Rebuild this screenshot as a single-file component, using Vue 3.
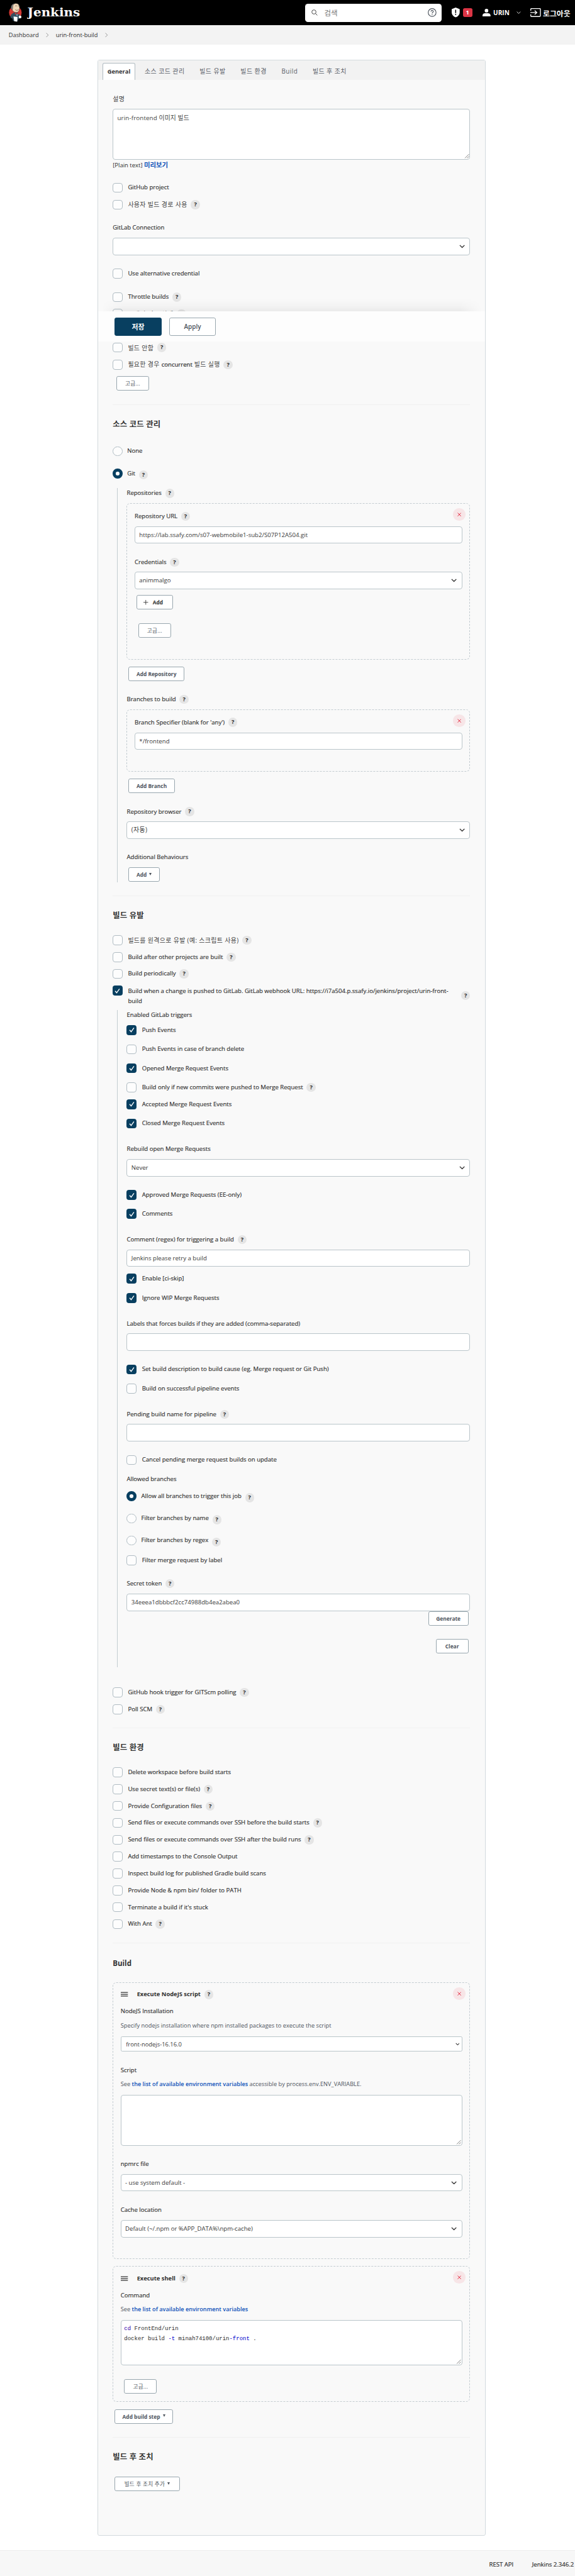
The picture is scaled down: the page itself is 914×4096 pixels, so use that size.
<script setup>
const tabs = ['소스 코드 관리', '빌드 유발', '빌드 환경', 'Build', '빌드 후 조치']

const environment = [
  { text: 'Delete workspace before build starts' },
  { text: 'Use secret text(s) or file(s)', help: true },
  { text: 'Provide Configuration files', help: true },
  { text: 'Send files or execute commands over SSH before the build starts', help: true },
  { text: 'Send files or execute commands over SSH after the build runs', help: true },
  { text: 'Add timestamps to the Console Output' },
  { text: 'Inspect build log for published Gradle build scans' },
  { text: 'Provide Node & npm bin/ folder to PATH' },
  { text: "Terminate a build if it's stuck" },
  { text: 'With Ant', help: true },
]

const events = [
  { text: 'Push Events', on: true },
  { text: 'Push Events in case of branch delete' },
  { text: 'Opened Merge Request Events', on: true },
  { text: 'Build only if new commits were pushed to Merge Request', help: true },
  { text: 'Accepted Merge Request Events', on: true },
  { text: 'Closed Merge Request Events', on: true },
]
</script>

<template>
  <div class="page">
    <svg class="defs" width="0" height="0">
      <symbol id="chev" viewBox="0 0 16 10"><path d="M1.5 1.5 8 8l6.5-6.5" fill="none" stroke="currentColor" stroke-width="2.4" /></symbol>
      <symbol id="cross" viewBox="0 0 12 12"><path d="M1 1l10 10M11 1L1 11" fill="none" stroke="currentColor" stroke-width="1.6" /></symbol>
      <symbol id="grip" viewBox="0 0 14 14"><path d="M2 13 13 2M8 13l5-5" fill="none" stroke="#555" stroke-width="1.3" /></symbol>
      <symbol id="bars" viewBox="0 0 20 14"><path d="M0 2h20M0 7h20M0 12h20" fill="none" stroke="#333" stroke-width="2.2" /></symbol>
    </svg>

    <header class="top">
      <svg class="butler" viewBox="0 0 36 51">
        <circle cx="18" cy="26" r="17.5" fill="#d33833" />
        <path d="M6 32 4.500 40l6 3 1 6 13 1 2-6 6-2-2-9-7-7-10 0z" fill="#335061" />
        <path d="M8 13C8 5 14 1 20 1c7 0 10 6 9.500 12-.3 7-2 12-8 12.500C14 26 9 21 8 13z" fill="#f0d6b7" stroke="#231f20" stroke-width=".8" />
        <path d="M7 16C5 9 8 3 15 1c-4 3-4 8-4 12l-1 5z" fill="#8a8683" stroke="#231f20" stroke-width=".7" />
        <path d="M18 8q2-1.500 4 0M25 8q1.500-1 3 0M18 18q4 4 9 0" fill="none" stroke="#231f20" stroke-width="1" />
        <path d="M17 25.500l5 3 5-3v6l-5-2-5 2z" fill="#d33833" />
        <path d="M20 31l5 0-2 6z" fill="#81b0c4" />
        <path d="M13 37l11 1-1 13-8-1z" fill="#fff" />
        <circle cx="31" cy="38" r="3.800" fill="#fff" />
      </svg>
      <svg class="wordmark" viewBox="0 0 150 50">
        <text x="1" y="35.500" textLength="145" lengthAdjust="spacingAndGlyphs">Jenkins</text>
      </svg>
      <div class="search">
        <svg class="lens" viewBox="0 0 17 17"><circle cx="7" cy="7" r="5.800" fill="none" stroke="#333" stroke-width="1.500" /><path d="M11.300 11.300l5 5" stroke="#333" stroke-width="1.600" /></svg>
        <span class="ph">검색</span>
        <svg class="qmark" viewBox="0 0 24 24"><circle cx="12" cy="12" r="10.800" fill="none" stroke="#4d545d" stroke-width="2" /><path d="M8.800 9.500c0-4.200 6.400-4.200 6.400-.2 0 2.500-3.200 2.400-3.200 5" fill="none" stroke="#4d545d" stroke-width="2" /><circle cx="12" cy="17.500" r="1.300" fill="#4d545d" /></svg>
      </div>
      <svg class="shield" viewBox="0 0 22 27"><path d="M11 0 22 4.500V13c0 7-5 12-11 14C5 25 0 20 0 13V4.500z" fill="#fff" /><path d="M11 6v9M11 17.500v3" stroke="#000" stroke-width="2.600" /></svg>
      <span class="alert">1</span>
      <svg class="person" viewBox="0 0 22 21"><circle cx="11" cy="5" r="5" fill="#fff" /><path d="M0 21v-3c0-4 4-6 7-6h8c3 0 7 2 7 6v3z" fill="#fff" /></svg>
      <b class="user">URIN</b>
      <svg class="drop" viewBox="0 0 12 8"><path d="M1 1l5 5 5-5" fill="none" stroke="#fff" stroke-width="1.400" /></svg>
      <svg class="exit" viewBox="0 0 29 24"><path d="M1.200 7V3q0-2 2-2h22.600q2 0 2 2v18q0 2-2 2H3.200q-2 0-2-2v-4" fill="none" stroke="#fff" stroke-width="2.300" /><path d="M0 12h17M12 6.500l6 5.500-6 5.500" fill="none" stroke="#fff" stroke-width="2.400" /></svg>
      <b class="logout">로그아웃</b>
    </header>

    <nav class="crumbs">
      <span>Dashboard</span>
      <svg viewBox="0 0 8 13"><path d="M1 1l5.500 5.500L1 12" fill="none" stroke="#888" stroke-width="1.500" /></svg>
      <span>urin-front-build</span>
      <svg viewBox="0 0 8 13"><path d="M1 1l5.500 5.500L1 12" fill="none" stroke="#888" stroke-width="1.500" /></svg>
    </nav>

    <main class="panel">
      <div class="tabs">
        <span class="tab active">General</span>
        <span v-for="t in tabs" :key="t" class="tab">{{ t }}</span>
      </div>

      <section class="sec general">
        <div class="label ko">설명</div>
        <div class="area tall"><span class="ko">urin-frontend 이미지 빌드</span><svg class="grip"><use href="#grip" /></svg></div>
        <div class="plain">[Plain text] <a class="kolink">미리보기</a></div>
        <div class="check"><i class="box"></i>GitHub project</div>
        <div class="check ko"><i class="box"></i>사용자 빌드 경로 사용<em class="help">?</em></div>
        <div class="label">GitLab Connection</div>
        <div class="field"><svg class="chev"><use href="#chev" /></svg></div>
        <div class="check"><i class="box"></i>Use alternative credential</div>
        <div class="check"><i class="box"></i>Throttle builds<em class="help">?</em></div>
        <div class="check ko"><i class="box"></i>오래된 빌드 삭제<em class="help">?</em></div>
        <div class="savebar">
          <button class="btn primary">저장</button>
          <button class="btn apply">Apply</button>
        </div>
        <div class="check ko"><i class="box"></i>빌드 안함<em class="help">?</em></div>
        <div class="check ko"><i class="box"></i><span>필요한 경우 <b class="mid">concurrent</b> 빌드 실행</span><em class="help">?</em></div>
        <button class="btn small ko in10">고급...</button>
      </section>

      <section class="sec scm">
        <div class="rule"></div>
        <h2>소스 코드 관리</h2>
        <div class="check rad"><i class="radio"></i>None</div>
        <div class="check rad"><i class="radio on"></i>Git<em class="help low">?</em></div>
        <div class="nested scm-body">
          <div class="label">Repositories<em class="help">?</em></div>
          <div class="card repo">
            <span class="x"><svg><use href="#cross" /></svg></span>
            <div class="label">Repository URL<em class="help">?</em></div>
            <div class="field">https://lab.ssafy.com/s07-webmobile1-sub2/S07P12A504.git</div>
            <div class="label">Credentials<em class="help">?</em></div>
            <div class="field">animmalgo<svg class="chev"><use href="#chev" /></svg></div>
            <button class="btn small add in5"><svg class="plus" viewBox="0 0 13 13"><path d="M6.500 0v13M0 6.500h13" stroke="#333" stroke-width="1.500" /></svg>Add</button>
            <button class="btn small ko in10">고급...</button>
          </div>
          <button class="btn small in5">Add Repository</button>
          <div class="label">Branches to build<em class="help">?</em></div>
          <div class="card branch">
            <span class="x"><svg><use href="#cross" /></svg></span>
            <div class="label">Branch Specifier (blank for 'any')<em class="help">?</em></div>
            <div class="field">*/frontend</div>
          </div>
          <button class="btn small in5">Add Branch</button>
          <div class="label">Repository browser<em class="help">?</em></div>
          <div class="field ko">(자동)<svg class="chev"><use href="#chev" /></svg></div>
          <div class="label">Additional Behaviours</div>
          <button class="btn small in5">Add<i class="tri"></i></button>
        </div>
      </section>

      <section class="sec triggers">
        <div class="rule"></div>
        <h2>빌드 유발</h2>
        <div class="check ko"><i class="box"></i>빌드를 원격으로 유발 (예: 스크립트 사용)<em class="help">?</em></div>
        <div class="check"><i class="box"></i>Build after other projects are built<em class="help">?</em></div>
        <div class="check"><i class="box"></i>Build periodically<em class="help">?</em></div>
        <div class="check wrap">
          <i class="box on"><svg viewBox="0 0 16 16"><path d="M3 8.500l3.500 4L13 3.500" /></svg></i>
          <span>Build when a change is pushed to GitLab. GitLab webhook URL: https://i7a504.p.ssafy.io/jenkins/project/urin-front-<br />build</span>
          <em class="help end">?</em>
        </div>
        <div class="nested trigger-body">
          <div class="label">Enabled GitLab triggers</div>
          <div v-for="e in events" :key="e.text" class="check">
            <i class="box" :class="{ on: e.on }"><svg v-if="e.on" viewBox="0 0 16 16"><path d="M3 8.500l3.500 4L13 3.500" /></svg></i>{{ e.text }}<em v-if="e.help" class="help">?</em>
          </div>
          <div class="label">Rebuild open Merge Requests</div>
          <div class="field">Never<svg class="chev"><use href="#chev" /></svg></div>
          <div class="check"><i class="box on"><svg viewBox="0 0 16 16"><path d="M3 8.500l3.500 4L13 3.500" /></svg></i>Approved Merge Requests (EE-only)</div>
          <div class="check"><i class="box on"><svg viewBox="0 0 16 16"><path d="M3 8.500l3.500 4L13 3.500" /></svg></i>Comments</div>
          <div class="label">Comment (regex) for triggering a build<em class="help">?</em></div>
          <div class="field">Jenkins please retry a build</div>
          <div class="check"><i class="box on"><svg viewBox="0 0 16 16"><path d="M3 8.500l3.500 4L13 3.500" /></svg></i>Enable [ci-skip]</div>
          <div class="check"><i class="box on"><svg viewBox="0 0 16 16"><path d="M3 8.500l3.500 4L13 3.500" /></svg></i>Ignore WIP Merge Requests</div>
          <div class="label">Labels that forces builds if they are added (comma-separated)</div>
          <div class="field"></div>
          <div class="check"><i class="box on"><svg viewBox="0 0 16 16"><path d="M3 8.500l3.500 4L13 3.500" /></svg></i>Set build description to build cause (eg. Merge request or Git Push)</div>
          <div class="check"><i class="box"></i>Build on successful pipeline events</div>
          <div class="label">Pending build name for pipeline<em class="help">?</em></div>
          <div class="field"></div>
          <div class="check"><i class="box"></i>Cancel pending merge request builds on update</div>
          <div class="label">Allowed branches</div>
          <div class="check rad"><i class="radio on"></i>Allow all branches to trigger this job<em class="help low">?</em></div>
          <div class="check rad"><i class="radio"></i>Filter branches by name<em class="help low">?</em></div>
          <div class="check rad"><i class="radio"></i>Filter branches by regex<em class="help low">?</em></div>
          <div class="check"><i class="box"></i>Filter merge request by label</div>
          <div class="label">Secret token<em class="help">?</em></div>
          <div class="field">34eeea1dbbbcf2cc74988db4ea2abea0</div>
          <button class="btn small right">Generate</button>
          <button class="btn small right clear">Clear</button>
        </div>
        <div class="check"><i class="box"></i>GitHub hook trigger for GITScm polling<em class="help">?</em></div>
        <div class="check"><i class="box"></i>Poll SCM<em class="help">?</em></div>
      </section>

      <section class="sec env">
        <div class="rule"></div>
        <h2>빌드 환경</h2>
        <div v-for="e in environment" :key="e.text" class="check"><i class="box"></i>{{ e.text }}<em v-if="e.help" class="help">?</em></div>
      </section>

      <section class="sec build">
        <div class="rule"></div>
        <h2 class="latin">Build</h2>
        <div class="card step node">
          <span class="x"><svg><use href="#cross" /></svg></span>
          <div class="title"><svg class="bars"><use href="#bars" /></svg>Execute NodeJS script<em class="help">?</em></div>
          <div class="label">NodeJS Installation</div>
          <div class="desc">Specify nodejs installation where npm installed packages to execute the script</div>
          <div class="field native">front-nodejs-16.16.0<svg class="chev"><use href="#chev" /></svg></div>
          <div class="label">Script</div>
          <div class="desc">See <a>the list of available environment variables</a> accessible by process.env.ENV_VARIABLE.</div>
          <div class="area"><svg class="grip"><use href="#grip" /></svg></div>
          <div class="label">npmrc file</div>
          <div class="field">- use system default -<svg class="chev"><use href="#chev" /></svg></div>
          <div class="label">Cache location</div>
          <div class="field">Default (~/.npm or %APP_DATA%\npm-cache)<svg class="chev"><use href="#chev" /></svg></div>
        </div>
        <div class="card step shell">
          <span class="x"><svg><use href="#cross" /></svg></span>
          <div class="title"><svg class="bars"><use href="#bars" /></svg>Execute shell<em class="help">?</em></div>
          <div class="label">Command</div>
          <div class="desc">See <a>the list of available environment variables</a></div>
          <div class="area code">
            <div class="line"><span class="cmd">cd</span> FrontEnd/urin</div>
            <div class="line">docker build <span class="opt">-t</span> minah74100/urin<span class="opt">-front</span> .</div>
            <svg class="grip"><use href="#grip" /></svg>
          </div>
          <button class="btn small ko in10">고급...</button>
        </div>
        <button class="btn small in5">Add build step<i class="tri"></i></button>
      </section>

      <section class="sec post">
        <div class="rule"></div>
        <h2>빌드 후 조치</h2>
        <button class="btn small ko in5 wide">빌드 후 조치 추가<i class="tri"></i></button>
      </section>
    </main>

    <footer class="foot"><span>REST API</span><span>Jenkins 2.346.2</span></footer>
  </div>
</template>

<style>
body {
  margin: 0;
  background: #fff;
}
</style>

<style scoped>
.page {
  zoom: 0.57662;
  width: 1585px;
  height: 7103px;
  overflow: hidden;
  display: flex;
  flex-direction: column;
  background: #fff;
  color: #2e2e2e;
  font-family: "Open Sans", "Noto Sans CJK KR", sans-serif;
  font-size: 16.6px;
}
.page * {
  box-sizing: border-box;
}
.defs {
  position: absolute;
}

/* header */
.top {
  flex: none;
  height: 70px;
  background: #000;
  color: #fff;
  display: flex;
  align-items: center;
  padding-left: 25px;
}
.top > * {
  flex: none;
}
.butler {
  width: 36px;
  height: 51px;
}
.wordmark {
  width: 150px;
  height: 50px;
  margin-left: 14px;
}
.wordmark text {
  font: bold 32px "DejaVu Serif", serif;
  fill: #fff;
}
.search {
  margin-left: 617px;
  width: 375px;
  height: 50px;
  border-radius: 8px;
  background: #fff;
  display: flex;
  align-items: center;
  padding: 0 13px 0 17px;
}
.lens {
  width: 17px;
  height: 17px;
}
.ph {
  margin-left: 18px;
  flex: 1;
  color: #777;
  font-size: 20px;
}
.qmark {
  width: 24px;
  height: 24px;
}
.shield {
  width: 22px;
  height: 27px;
  margin-left: 29px;
}
.alert {
  margin-left: 8px;
  width: 26px;
  height: 25px;
  border-radius: 5px;
  background: #dc3545;
  font-weight: 700;
  font-size: 16px;
  line-height: 25px;
  text-align: center;
}
.person {
  width: 22px;
  height: 21px;
  margin-left: 29px;
}
.user {
  width: 50px;
  margin-left: 7px;
  font-size: 17.5px;
  white-space: nowrap;
}
.drop {
  width: 12px;
  height: 8px;
  margin-left: 14px;
}
.exit {
  width: 29px;
  height: 24px;
  margin-left: 27px;
}
.logout {
  margin-left: 5px;
  font-size: 20.500px;
  white-space: nowrap;
}

/* breadcrumbs */
.crumbs {
  flex: none;
  height: 54px;
  background: #f3f3f3;
  display: flex;
  align-items: center;
  padding-left: 24px;
  font-size: 16.1px;
}
.crumbs svg {
  width: 8px;
  height: 13px;
  margin: 0 19px 0 20px;
}

/* panel */
.panel {
  flex: none;
  width: 1069px;
  height: 6829px;
  margin: 40px 0 0 269px;
  border: 1px solid #d3dade;
  border-radius: 5px;
  background: #f9f9f9;
}
.tabs {
  height: 54px;
  background: #f2f2f2;
  display: flex;
  align-items: flex-end;
  padding-left: 12px;
}
.tab {
  height: 47px;
  line-height: 46px;
  margin-left: 41px;
  font-size: 17.3px;
  letter-spacing: 0.75px;
  color: #5a6069;
  white-space: nowrap;
}
.tab.active {
  width: 90px;
  margin: 0 -15px 0 0;
  border: 1px solid #b0bbc1;
  border-bottom: 0;
  border-radius: 5px 5px 0 0;
  background: #fff;
  color: #333;
  font-size: 16.2px;
  font-weight: 700;
  letter-spacing: 0;
  text-align: center;
}
.sec {
  display: grid;
  padding: 0 40px;
  align-items: start;
  justify-items: start;
}
.sec > *,
.nested > *,
.card > * {
  min-height: 0;
}
.general {
  padding-top: 39px;
  grid-template-rows: 42px 140px 63px 47px 64px 41px 85px 65px 46px 7px 86px 47px 46px 77px;
}
.scm {
  grid-template-rows: 39px 77px 61px 55px 1086px 37px;
}
.scm-body {
  height: 1086px;
  grid-template-rows: 41px 451px 76px 42px 191px 77px 41px 85px 42px 40px;
}
.triggers {
  grid-template-rows: 39px 70px 47px 46px 47px 67px 1868px 46px 65px;
}
.trigger-body {
  height: 1812px;
  grid-template-rows: 41px 53px 52.5px 52.5px 47px 53px 70px 42px 85px 52px 71px 41px 67px 53px 71px 41px 85px 53px 71px 41px 85px 53px 47px 61px 61px 55px 64px 42px 48px 77px 77px;
}
.env {
  grid-template-rows: 38px 71px repeat(9, 46.5px) 64.5px;
}
.build {
  grid-template-rows: 40px 70px 782.5px 394.5px 77px;
}
.post {
  grid-template-rows: 39px 70px 40px;
}
.nested {
  display: grid;
  justify-self: stretch;
  align-items: start;
  justify-items: start;
  margin-left: 12px;
  border-left: 3px solid #c3ccd1;
  padding-left: 25px;
}
.rule {
  width: 100%;
  height: 2px;
  background: #f1f1f1;
}
h2 {
  margin: 0;
  height: 34px;
  line-height: 34px;
  font-size: 21.5px;
  font-weight: 700;
  letter-spacing: 0.3px;
  color: #333;
}
h2.latin {
  font-size: 20.1px;
  letter-spacing: 0;
}

/* labels and options */
.label,
.check,
.title,
.plain,
.desc {
  height: 28px;
  line-height: 28px;
  display: flex;
  align-items: center;
  white-space: nowrap;
  font-weight: 500;
  -webkit-text-stroke: 0.25px currentColor;
}
.ko.label,
.ko.check {
  font-size: 17.2px;
  font-weight: 400;
  letter-spacing: 0.65px;
  color: #444;
  -webkit-text-stroke: 0;
}
.mid {
  font-size: 16.6px;
  font-weight: 500;
  letter-spacing: 0;
  color: #2e2e2e;
  -webkit-text-stroke: 0.35px currentColor;
}
.plain,
.desc {
  display: block;
  font-weight: 400;
  -webkit-text-stroke: 0;
}
.plain {
  font-size: 16.5px;
}
.desc {
  font-size: 16.05px;
  color: #4d545d;
}
.desc a,
.plain a {
  color: #0b50b8;
  font-weight: 600;
  font-size: 15.8px;
}
.plain .kolink {
  font-size: 18px;
  font-weight: 700;
}
.title {
  font-size: 16.25px;
  font-weight: 700;
  -webkit-text-stroke: 0;
}
.bars {
  width: 20px;
  height: 14px;
  margin: 0 24px 0 1px;
}
.help {
  flex: none;
  width: 25px;
  height: 25px;
  margin-left: 10px;
  border-radius: 50%;
  background: #e5e5e5;
  color: #222;
  font: 700 16px/25px "Open Sans", sans-serif;
  letter-spacing: 0;
  text-align: center;
  -webkit-text-stroke: 0;
}
.help.low {
  position: relative;
  top: 4px;
}
.help.end {
  margin: 14px 0 0 auto;
}
.box,
.radio {
  flex: none;
  width: 27px;
  height: 27px;
  margin-right: 15px;
  border: 2px solid #b0bcc3;
  border-radius: 7px;
  background: #fdfdfd;
}
.rad .radio {
  margin-right: 13px;
  border-radius: 50%;
}
.box.on {
  border: 0;
  background: #083f60;
}
.box svg {
  display: block;
  width: 19px;
  height: 19px;
  margin: 4px;
}
.box path {
  fill: none;
  stroke: #fff;
  stroke-width: 2;
}
.rad .radio.on {
  border: 10px solid #083f60;
  background: #fff;
}
.check.wrap {
  width: 100%;
  height: 55px;
  align-items: flex-start;
}
.wrap span {
  line-height: 27px;
  padding-top: 1px;
}

/* inputs */
.field {
  position: relative;
  width: 100%;
  height: 48px;
  line-height: 45px;
  padding-left: 11px;
  border: 2px solid #bac5ca;
  border-radius: 7px;
  background: #fff;
  color: #3a3a3a;
  font-size: 16.65px;
  white-space: nowrap;
}
.field.ko {
  font-size: 17.2px;
  letter-spacing: 0.6px;
}
.chev {
  position: absolute;
  right: 13px;
  top: 17px;
  width: 16px;
  height: 10px;
  color: #333;
}
.field.native {
  height: 43px;
  line-height: 42px;
  padding-left: 13px;
  border-width: 1px;
  border-radius: 4px;
  font-size: 16.3px;
}
.native .chev {
  right: 6px;
  width: 12px;
  height: 8px;
}
.area {
  position: relative;
  width: 100%;
  height: 140px;
  padding: 9px 11px;
  border: 2px solid #bac5ca;
  border-radius: 7px;
  background: #fff;
  line-height: 28px;
}
.area .ko {
  font-size: 17px;
  letter-spacing: 0.2px;
  color: #444;
}
.grip {
  position: absolute;
  right: 1px;
  bottom: 1px;
  width: 14px;
  height: 14px;
}
.area.code {
  height: 124.5px;
  padding: 8px 8px;
}
.line {
  height: 28.5px;
  white-space: pre;
  font: 15.6px/28.5px "Liberation Mono", monospace;
}
.cmd {
  color: #30a;
}
.opt {
  color: #00c;
}

/* buttons */
.btn {
  display: flex;
  align-items: center;
  justify-content: center;
  padding: 0 20px;
  border: 2px solid #98a6ae;
  border-radius: 5px;
  background: #fff;
  color: #4d545d;
  font-family: inherit;
  font-weight: 700;
  white-space: nowrap;
}
.btn.small {
  height: 40px;
  font-size: 14.5px;
}
.btn.small.ko {
  width: 90px;
  font-size: 15px;
  font-weight: 400;
  letter-spacing: 0.4px;
}
.btn.small.wide {
  width: 180px;
  padding: 0;
}
.btn.add {
  width: 101px;
  padding: 0 8px 0 0;
  color: #333;
}
.plus {
  width: 13px;
  height: 13px;
  margin-right: 12px;
}
.in5 {
  margin-left: 5px;
}
.in10 {
  margin-left: 10px;
}
.right {
  justify-self: end;
  margin-right: 5px;
}
.clear {
  width: 90px;
}
.tri {
  margin: -3px 0 0 7px;
  border: 5px solid transparent;
  border-top: 8px solid #4d545d;
  border-bottom: 0;
}
.savebar {
  position: relative;
  z-index: 1;
  justify-self: stretch;
  margin: 0 -40px;
  height: 84px;
  background: #fdfdfd;
  display: flex;
  align-items: center;
  gap: 20px;
  padding-left: 45px;
}
.savebar::before {
  content: "";
  position: absolute;
  left: 0;
  right: 0;
  bottom: 100%;
  height: 34px;
  background: linear-gradient(to top, rgba(0, 0, 0, 0.055), rgba(0, 0, 0, 0.02) 50%, transparent);
  -webkit-mask-image: linear-gradient(to right, transparent 10px, #000 70px, #000 calc(100% - 70px), transparent calc(100% - 10px));
  mask-image: linear-gradient(to right, transparent 10px, #000 70px, #000 calc(100% - 70px), transparent calc(100% - 10px));
}
.savebar .btn {
  width: 130px;
  height: 50px;
  font-size: 17.2px;
  font-weight: 600;
}
.savebar .primary {
  border-color: #083f60;
  background: #083f60;
  color: #fff;
  font-size: 19px;
}

/* repeatable blocks */
.card {
  position: relative;
  width: 100%;
  display: grid;
  align-items: start;
  justify-items: start;
  border: 2px dashed #c3ccd1;
  border-radius: 10px;
  padding: 21px 20px 0;
}
.repo {
  height: 431px;
  grid-template-rows: 41px 85px 41px 64px 77px 40px;
  align-content: start;
}
.branch {
  height: 171px;
  padding-top: 20px;
  grid-template-rows: 42px 48px;
  align-content: start;
}
.node {
  height: 763px;
  padding-top: 18px;
  grid-template-rows: 47px 39px 43px 80px 39px 43px 177.5px 40.5px 85px 42px 48px;
  align-content: start;
}
.shell {
  height: 374.5px;
  padding-top: 18.5px;
  grid-template-rows: 47px 39px 43px 162px 40px;
  align-content: start;
}
.x {
  position: absolute;
  right: 12px;
  top: 12.5px;
  width: 34px;
  height: 34px;
  border-radius: 50%;
  background: #f7e5e7;
  color: #e0112b;
  display: flex;
  align-items: center;
  justify-content: center;
}
.x svg {
  width: 11px;
  height: 11px;
}

/* footer */
.foot {
  flex: none;
  margin-top: 40px;
  height: 71px;
  border-top: 1px solid #ececec;
  background: #f7f7f7;
  display: flex;
  align-items: center;
  justify-content: flex-end;
  gap: 51px;
  padding: 3px 3px 0 0;
  font-weight: 500;
  -webkit-text-stroke: 0.3px currentColor;
}
</style>
